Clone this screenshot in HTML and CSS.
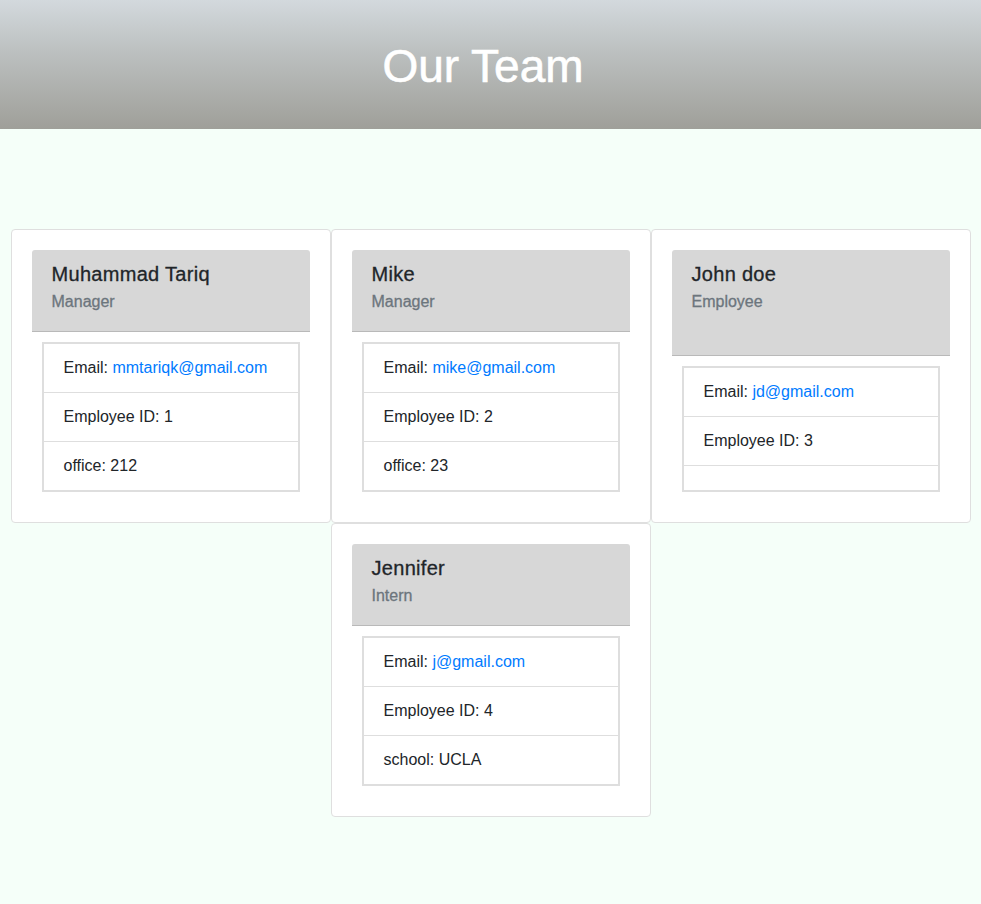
FILE: index.html
```html
<!DOCTYPE html>
<html lang="en">
<head>
<meta charset="utf-8">
<title>Our Team</title>
<link rel="stylesheet" href="styles.css">
</head>
<body>
<header class="jumbo">
  <h1 class="jumbo-title">Our Team</h1>
</header>
<main class="team">
  <div class="card">
    <div class="card-header">
      <h5 class="card-title">Muhammad Tariq</h5>
      <h6 class="card-subtitle">Manager</h6>
    </div>
    <ul class="list-group">
      <li class="list-item">Email: <a href="#">mmtariqk@gmail.com</a></li>
      <li class="list-item">Employee ID: 1</li>
      <li class="list-item">office: 212</li>
    </ul>
  </div>
  <div class="card">
    <div class="card-header">
      <h5 class="card-title">Mike</h5>
      <h6 class="card-subtitle">Manager</h6>
    </div>
    <ul class="list-group">
      <li class="list-item">Email: <a href="#">mike@gmail.com</a></li>
      <li class="list-item">Employee ID: 2</li>
      <li class="list-item">office: 23</li>
    </ul>
  </div>
  <div class="card">
    <div class="card-header">
      <h5 class="card-title">John doe</h5>
      <h6 class="card-subtitle">Employee</h6>
      <p class="card-text">&nbsp;</p>
    </div>
    <ul class="list-group">
      <li class="list-item">Email: <a href="#">jd@gmail.com</a></li>
      <li class="list-item">Employee ID: 3</li>
      <li class="list-item"></li>
    </ul>
  </div>
  <div class="card">
    <div class="card-header">
      <h5 class="card-title">Jennifer</h5>
      <h6 class="card-subtitle">Intern</h6>
    </div>
    <ul class="list-group">
      <li class="list-item">Email: <a href="#">j@gmail.com</a></li>
      <li class="list-item">Employee ID: 4</li>
      <li class="list-item">school: UCLA</li>
    </ul>
  </div>
</main>
</body>
</html>
```
FILE: styles.css
```css
* { box-sizing: border-box; }
html, body { margin: 0; padding: 0; }
body {
  background: #f5fff9;
  font-family: "Liberation Sans", Arial, sans-serif;
  font-size: 16px;
  line-height: 24px;
  color: #212529;
}
.jumbo {
  height: 129px;
  background: linear-gradient(to bottom, #d3d9dd 0%, #bcc0c0 40%, #9f9f99 100%);
  padding-top: 43px;
  padding-right: 15px;
}
.jumbo-title {
  margin: 0;
  text-align: center;
  color: #ffffff;
  font-size: 46px;
  line-height: 46px;
  font-weight: 400;
  -webkit-text-stroke: 0.6px #ffffff;
}
.team {
  display: flex;
  flex-wrap: wrap;
  justify-content: center;
  padding-top: 100px;
}
.card {
  width: 320px;
  background: #ffffff;
  border: 1px solid #dfdfdf;
  border-radius: 4px;
  padding: 20px;
}
.card-header {
  background: #d7d7d7;
  border-bottom: 1px solid #b9b9b9;
  border-radius: 3px 3px 0 0;
  padding: 12px 20px;
}
.card-title {
  margin: 0 0 6px;
  font-size: 20px;
  line-height: 24px;
  font-weight: 400;
  letter-spacing: 0.3px;
  -webkit-text-stroke: 0.3px #212529;
  color: #212529;
}
.card-subtitle {
  margin: 0 0 8px;
  font-size: 16px;
  line-height: 19.2px;
  font-weight: 400;
  -webkit-text-stroke: 0.3px #6c757d;
  color: #6c757d;
}
.card-text {
  margin: 0;
  line-height: 24px;
}
.list-group {
  list-style: none;
  margin: 10px;
  padding: 0;
  border: 2px solid #dedede;
}
.list-item {
  padding: 12px 20px;
  min-height: 24px;
  border-top: 1px solid #dedede;
}
.list-item:first-child { border-top: 0; }
.list-item a {
  color: #007bff;
  text-decoration: none;
}
```
